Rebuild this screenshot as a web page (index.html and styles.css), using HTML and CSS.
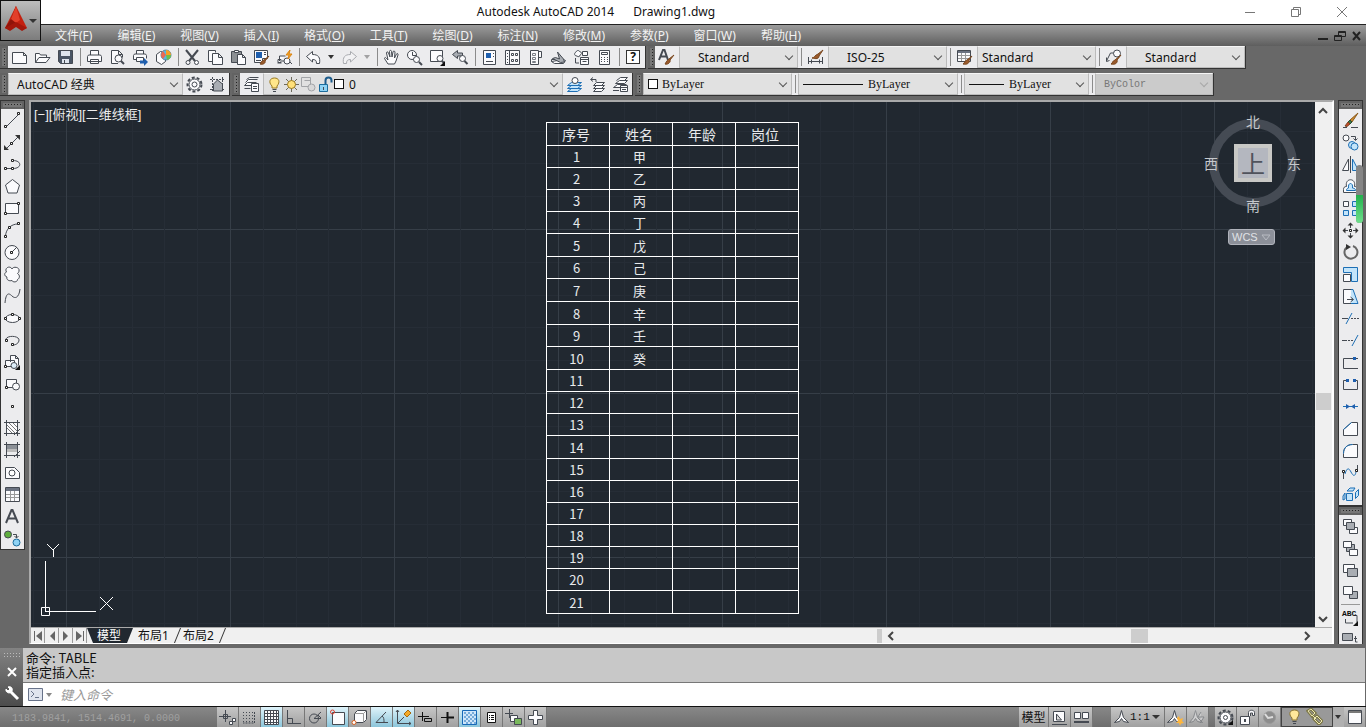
FILE: index.html
```html
<!DOCTYPE html>
<html lang="zh-CN">
<head>
<meta charset="UTF-8">
<meta name="viewport" content="width=device-width, initial-scale=1.0">
<title>Autodesk AutoCAD 2014 Drawing1.dwg</title>
<link rel="stylesheet" href="styles.css">
</head>
<body>
  <header class="top">
    <button class="app-button" aria-label="应用程序菜单">
      <svg width="38" height="38"><path d="M15 4L4 26l5 2 6-4 6 4 5-2z" fill="#c3200f"/><path d="M15 4L10 17l-6 9 5 2 6-8z" fill="#8f1409"/><path d="M15 4l4 14-4 3-5-4z" fill="#e2402a"/><path d="M4 26l11-6 11 6-5 3-6-4-6 4z" fill="#a3170b"/><path d="M28 17h8l-4 4z" fill="#333"/></svg>
    </button>
    <div class="titlebar">
      <h1>Autodesk AutoCAD 2014 <span>Drawing1.dwg</span></h1>
      <div class="window-buttons">
        <button aria-label="最小化"><svg width="12" height="12"><path d="M1 6.500h10"/></svg></button>
        <button aria-label="还原"><svg width="12" height="12"><path d="M1.500 3.500h7v7h-7zM3.500 3.500v-2h7v7h-2"/></svg></button>
        <button aria-label="关闭"><svg width="12" height="12"><path d="M1 1l10 10M11 1L1 11"/></svg></button>
      </div>
    </div>
    <nav class="menubar">
      <a href="#">文件(<u>F</u>)</a>
      <a href="#">编辑(<u>E</u>)</a>
      <a href="#">视图(<u>V</u>)</a>
      <a href="#">插入(<u>I</u>)</a>
      <a href="#">格式(<u>O</u>)</a>
      <a href="#">工具(<u>T</u>)</a>
      <a href="#">绘图(<u>D</u>)</a>
      <a href="#">标注(<u>N</u>)</a>
      <a href="#">修改(<u>M</u>)</a>
      <a href="#">参数(<u>P</u>)</a>
      <a href="#">窗口(<u>W</u>)</a>
      <a href="#">帮助(<u>H</u>)</a>
      <div class="doc-buttons">
        <button aria-label="最小化图形"><svg width="12" height="12"><path d="M1 9h10" stroke-width="2"/></svg></button>
        <button aria-label="还原图形"><svg width="12" height="12"><path d="M.500 5.500h7v5h-7zM4.500 5v-3.500h7v5h-4M.500 6.500h7M4.500 2.500h7"/></svg></button>
        <button aria-label="关闭图形"><svg width="12" height="12"><path d="M2 2l7 8M9 2l-7 8" stroke-width="2"/></svg></button>
      </div>
    </nav>
  </header>

  <!-- 标准 / 样式 -->
  <div class="toolrow">
    <div class="toolbar">
      <span class="grip"></span>
      <button class="tb" aria-label="新建"><svg><path class="p" d="M1.500 3.500h11l3 3v8h-14zM12.500 3.500v3h3"/></svg></button>
      <button class="tb" aria-label="打开"><svg><path class="p" d="M1.500 13.500v-9h4l1 1.500h6v3M1.500 13.500l3.500-5h11l-4 5z"/></svg></button>
      <button class="tb" aria-label="保存"><svg><path d="M1.500 1.500h14v13h-12l-2-2z" fill="#4a5565"/><path d="M4 2h9v5H4zM5 10h7v4H5z" fill="#dfe5ee" stroke="none"/><path d="M7.500 11v3"/></svg></button>
      <span class="sep"></span>
      <button class="tb" aria-label="打印"><svg><path class="p" d="M4.500 6V1.500h8V6M1.500 12.500v-5l1-1.500h12l1 1.500v5zM4.500 10.500h8v4h-8z"/></svg></button>
      <button class="tb" aria-label="打印预览"><svg><path class="p" d="M9 14.500H2.500v-13h7l4 4v3M9.500 1.500v4h4"/><circle class="p" cx="9.500" cy="9.500" r="3.500"/><path d="M12 12l3 3" stroke-width="2"/></svg></button>
      <button class="tb" aria-label="发布"><svg><path class="p" d="M4.500 5V1.500h7V5M1.500 10.500v-4l1-1.500h11l1 1.500v3M4 10.500h-2.500M4.500 8.500h7v4h-7z"/><path class="blue" d="M8 11.500h4V9l4 4-4 4v-2.500H8z"/></svg></button>
      <button class="tb" aria-label="三维打印"><svg><path class="p" d="M1.500 5.500l4-3 5 1v9l-4 3-5-3z"/><circle cx="11" cy="6" r="5" fill="#53b8e4" stroke="#5b87a0"/><path d="M11 1a5 5 0 015 5h-5z" fill="#f3a128" stroke="none"/><path d="M8 2l3 4-3 4a5 5 0 010-8z" fill="#e86a54" stroke="none"/><path d="M11 6h5a5 5 0 01-4 5z" fill="#6cc04a" stroke="none"/></svg></button>
      <span class="sep"></span>
      <button class="tb" aria-label="剪切"><svg><path d="M2 1l9 11M14 1L5 12" stroke-width="2"/><circle class="p" cx="4" cy="13.500" r="2"/><circle class="p" cx="12.500" cy="13.500" r="2"/></svg></button>
      <button class="tb" aria-label="复制"><svg><path class="p" d="M5 12.500H1.500v-11h7v2M5.500 4.500h6l4 4v7h-10zM11.500 4.500v4h4"/></svg></button>
      <button class="tb" aria-label="粘贴"><svg><path d="M1.500 2.500h10v11h-10z" fill="#8b8f93"/><path class="p" d="M4.500 1.500h4v2h-4zM7.500 5.500h5l3 3v7h-8zM12.500 5.500v3h3"/></svg></button>
      <button class="tb" aria-label="特性匹配"><svg><path class="p" d="M1.500 1.500h13v8h-5v4h-8z"/><path class="blue" d="M3 3h6v6H3z"/><path d="M11 3.500h2M11 5.500h2M3 11.500h5"/><path class="brush" d="M16 7l-4 5c1 2-2 4-5 3 1-1 1-3 4-4z"/></svg></button>
      <button class="tb" aria-label="块编辑器"><svg><path class="p" d="M1.500 14h4M3.500 12v-5h6M2 10.500h3v3H2z"/><circle class="p" cx="11" cy="12" r="3"/><path d="M6 12h2M14 13l2 2"/><path d="M14 1l-4 5h3l-1 4 4-5h-3z" fill="#f7a928" stroke="#d98212"/></svg></button>
      <span class="sep"></span>
      <button class="tb" aria-label="放弃"><svg><path class="p" d="M1.500 7.500l6-5v3c6 0 8 3 7 9h-3c0-3-1-4-4-4v2.500z"/></svg></button>
      <button class="tb-arrow" aria-label="放弃列表"><i></i></button>
      <button class="tb dim" aria-label="重做"><svg><path class="p" d="M15.500 7.500l-6-5v3c-6 0-8 3-7 9h3c0-3 1-4 4-4v2.500z"/></svg></button>
      <button class="tb-arrow dim" aria-label="重做列表"><i></i></button>
      <span class="sep"></span>
      <button class="tb" aria-label="平移"><svg><path class="p" d="M5 15L1.500 9.500c0-1 1-1.500 2 0L5 11 3.500 4c0-1.500 1.500-1.500 2 0L7 8 6.500 2.500c0-1.500 2-1.500 2 0L9 8l1-5c0-1.500 2-1 2 0l-.500 6 2-4c.500-1 2-.500 1.500 1L13 12l-1.500 3z"/></svg></button>
      <button class="tb" aria-label="实时缩放"><svg><circle class="p" cx="6" cy="6" r="4.500"/><path d="M6.500 3v3.500H10"/><circle class="p" cx="10.500" cy="10.500" r="3"/><path d="M13 13l3 3" stroke-width="2"/></svg></button>
      <button class="tb" aria-label="窗口缩放"><svg><path class="p" d="M1.500 1.500h12v11h-12z"/><circle class="p" cx="11" cy="9.500" r="3"/><path d="M13 12l2 2" stroke-width="2"/><path d="M16 12v5h-5z" fill="#111" stroke="none"/></svg></button>
      <button class="tb" aria-label="缩放上一个"><svg><path class="g" d="M.500 5.500l5-4v2.500h5v3h-5v2.500z"/><circle class="p" cx="10.500" cy="9.500" r="3"/><path d="M12.500 12l3 3" stroke-width="2"/></svg></button>
      <span class="sep"></span>
      <button class="tb" aria-label="特性"><svg><path class="p" d="M2.500 1.500h12v14h-12z"/><path class="blue" d="M5 4h5v5H5z"/><path d="M12.500 4v1M12.500 7v1M5 12.500h7"/></svg></button>
      <button class="tb" aria-label="设计中心"><svg><path class="p" d="M1.500 1.500h14v14h-14zM5.500 1.500v14M7.500 4.500h2v2h-2zM11.500 4.500h2v2h-2zM7.500 10.500h2v2h-2zM11.500 10.500h2v2h-2z"/><path d="M3 4.500h1M3 7.500h1M3 10.500h1M3 13.500h1"/></svg></button>
      <button class="tb" aria-label="工具选项板"><svg><path class="p" d="M3.500 1.500h8v14h-8zM11.500 2.500h3v6h-3"/><path d="M5.500 4.500h3v2h-3zM5.500 8.500h3v2h-3zM5.500 12.500h3v1h-3z" stroke="#7a7f86"/></svg></button>
      <button class="tb" aria-label="图纸集管理器"><svg><path class="p" d="M1.500 12.500l3 2h9l2-3-2-1zM1.500 12.500v-2h7"/><path class="g" d="M2.500 9.500l3-1 4 1.500-2-7 6 7 1 3-4 .500z"/></svg></button>
      <button class="tb" aria-label="标记集管理器"><svg><path class="p" d="M3 3c1-2 3-2 4 0 2 0 2 2 0 3 0 2-2 2-3 1-3 0-3-3-1-4zM9.500 2.500h5v4h-5zM7.500 8.500h8v7h-8zM7.500 10.500h8M9.500 12.500h4"/><path d="M2.500 9v5H6"/></svg></button>
      <button class="tb" aria-label="快速计算器"><svg><path class="p" d="M3.500 1.500h10v14h-10zM5.500 3.500h6v2h-6z"/><path d="M5 8.500h7M5 10.500h7M5 12.500h7" stroke-dasharray="1 2"/></svg></button>
      <span class="sep"></span>
      <button class="tb help" aria-label="帮助"><span>?</span></button>
    </div>
    <div class="toolbar styles">
      <span class="grip"></span>
      <button class="tb" aria-label="文字样式管理"><svg><path d="M1 11L5 1h1.500l3.500 10M3 7.500h5" stroke-width="2"/><path class="brush" d="M16 6l-4 5c1 2-2 5-5 4 1-1 1-3 4-5z"/></svg></button>
      <label class="combo inset"><select aria-label="文字样式"><option>Standard</option></select></label>
      <span class="sep"></span>
      <button class="tb" aria-label="标注样式管理"><svg><path d="M1.500 8v7M15.500 8v7M2 12.500h13M4.500 10.500v4M12.500 10.500v4"/><path class="brush" d="M16 1l-4 6c0 3-3 3-7 2 2 0 3-3 6-4z"/></svg></button>
      <label class="combo inset"><select aria-label="标注样式"><option>ISO-25</option></select></label>
      <span class="sep"></span>
      <button class="tb" aria-label="表格样式管理"><svg><path class="p" d="M1.500 1.500h13v11h-13z"/><path d="M2 6.500h12M2 9.500h12M5.500 4v8M9.500 4v8" stroke="#999"/><path d="M2 3h12" stroke-width="2" stroke="#6b7280"/><path class="brush" d="M16 7l-3 4c1 3-2 5-6 4 2-1 1-3 4-4z"/></svg></button>
      <label class="combo"><select aria-label="表格样式"><option>Standard</option></select></label>
      <span class="sep"></span>
      <button class="tb" aria-label="多重引线样式管理"><svg><path d="M1.500 12l4-8h4M1.500 8.500v4l3-1"/><circle class="p" cx="12" cy="4.500" r="3.500"/><path class="brush" d="M16 6l-4 5c1 3-2 5-6 4 2-1 1-3 4-4z"/></svg></button>
      <label class="combo inset"><select aria-label="多重引线样式"><option>Standard</option></select></label>
    </div>
  </div>

  <!-- 工作空间 / 图层 / 特性 -->
  <div class="toolrow">
    <div class="toolbar">
      <span class="grip"></span>
      <label class="combo workspace"><select aria-label="工作空间"><option>AutoCAD 经典</option></select></label>
      <button class="tb" aria-label="工作空间设置"><svg><circle cx="8.500" cy="8.500" r="7" stroke-width="2" stroke-dasharray="3 2"/><circle class="p" cx="8.500" cy="8.500" r="5.500"/><circle cx="8.500" cy="8.500" r="2.500"/></svg></button>
      <button class="tb" aria-label="我的工作空间"><svg><path d="M1 3.500h15M1 13.500h15M3.500 1v15M13.500 1v15" stroke-dasharray="2 1"/><path class="g" d="M4.500 15V8l4-4 5 4v7z"/></svg></button>
    </div>
    <div class="toolbar">
      <span class="grip"></span>
      <button class="tb" aria-label="图层特性管理器"><svg><path class="p" d="M8 9.500H1.500l3-3h9M2.500 6.500l3-3h9M3.500 3.500l3-2h9M1.500 12.500h6M8.500 7.500h7v8h-7z"/><path d="M10 10.500h4M10 12.500h4"/></svg></button>
      <label class="combo layer">
        <svg><path d="M6 10c-4-4-2-8 2.500-8s6 4 2.500 8v2H6z" fill="#ffe68a" stroke="#9a7a20"/><path d="M6.500 13.500h4M7 15.500h3"/></svg>
        <svg><path d="M8.500 1v15M1 8.500h15M3 3l11 11M14 3L3 14" stroke="#6c6a5c"/><circle cx="8.500" cy="8.500" r="4" fill="#ffe07a" stroke="#9a7a20"/></svg>
        <svg class="dim"><path d="M1.500 1.500h9v9h-9zM4.500 4.500h6"/><circle cx="11.500" cy="11.500" r="3.500" fill="#ccc"/></svg>
        <svg><path d="M2.500 8.500h8v7h-8z" fill="#8fd3f5" stroke="#1c6c9c"/><path d="M8.500 8V4.500c0-4 6-4 6 0v2" stroke="#1c5c8c" stroke-width="2"/><path d="M6.500 11v3"/></svg>
        <i class="swatch"></i>
        <select aria-label="图层"><option>0</option></select>
      </label>
      <button class="tb" aria-label="将对象的图层置为当前"><svg><path class="b" d="M1.500 9.500l4-3h10l-4 3zM1.500 12.500l4-3h10l-4 3zM1.500 15.500l4-3h10l-4 3z"/><circle cx="9" cy="4.500" r="3" fill="#fff"/></svg></button>
      <button class="tb" aria-label="上一个图层"><svg><path class="p" d="M4.500 9.500l3-3h8l-3 3zM4.500 12.500l3-3h8l-3 3zM4.500 15.500l3-3h8l-3 3z"/><path d="M7 6V3.500H2M4 1.500l-2.500 2 2.500 2"/></svg></button>
      <button class="tb" aria-label="图层状态管理器"><svg><path class="p" d="M8 11.500H1.500l4-3h9M3.500 7.500l4-3h8l-3 3zM4.500 4.500l4-3h7l-3 3M8.500 9.500h7v6h-7zM8.500 11.500h7"/><path d="M1 14.500h6M10 13.500h4"/></svg></button>
    </div>
    <div class="toolbar props">
      <span class="grip"></span>
      <label class="combo color"><i class="swatch"></i><select aria-label="颜色"><option>ByLayer</option></select></label>
      <span class="sep"></span>
      <label class="combo ltype"><i class="line"></i><select aria-label="线型"><option>ByLayer</option></select></label>
      <span class="sep"></span>
      <label class="combo lweight"><i class="line"></i><select aria-label="线宽"><option>ByLayer</option></select></label>
      <span class="sep"></span>
      <label class="combo pstyle"><select aria-label="打印样式" disabled><option>ByColor</option></select></label>
    </div>
  </div>

  <main class="work">
    <div class="side">
      <div class="toolbar vertical">
        <span class="grip"></span>
        <button class="tb" aria-label="直线"><svg><path d="M3 14L14 3"/><path class="n" d="M.500 13.500h2v2h-2zM13.500.500h2v2h-2z"/></svg></button>
        <button class="tb" aria-label="构造线"><svg><path d="M2 15L15 2"/><path class="n" d="M6.500 8.500h2v2h-2z"/><path d="M11 1h5v5zM0 11v5h5z" fill="#333" stroke="none"/></svg></button>
        <button class="tb" aria-label="多段线"><svg><path d="M2 12.500h6M9 4.500c9 0 9 8 0 8"/><path class="n" d="M.500 11.500h2v2h-2zM7.500 11.500h2v2h-2zM7.500 3.500h2v2h-2z"/></svg></button>
        <button class="tb" aria-label="多边形"><svg><path class="p" d="M8.500 1.500l7 5.500-2.500 8H4L1.500 7z"/></svg></button>
        <button class="tb" aria-label="矩形"><svg><path class="p" d="M1.500 3.500h13v10h-13z"/><path class="n" d="M.500 12.500h2v2h-2zM13.500 2.500h2v2h-2z"/></svg></button>
        <button class="tb" aria-label="圆弧"><svg><path d="M1.500 14C2 7 7 2 14 2"/><path class="n" d="M.500 13.500h2v2h-2zM4.500 4.500h2v2h-2zM13.500.500h2v2h-2z"/></svg></button>
        <button class="tb" aria-label="圆"><svg><circle class="p" cx="8" cy="8.500" r="7"/><path d="M8 8l5-5"/><path class="n" d="M6.500 7.500h2v2h-2z"/></svg></button>
        <button class="tb" aria-label="修订云线"><svg><path class="p" d="M8 3c1-3 8-2 7 2 0 1-1 2-1.500 2.500 3 2 2 5 0 6 0 3-5 3-5.500 1-3 1-6-1-5-3.500-3-1-3-4-.500-5C0 2 6-1 8 3z"/></svg></button>
        <button class="tb" aria-label="样条曲线"><svg><path d="M1 15C2 4 5 5 8 8s7 2 8-7"/></svg></button>
        <button class="tb" aria-label="椭圆"><svg><ellipse class="p" cx="8.500" cy="8.500" rx="7" ry="4"/><path class="n" d="M.500 7.500h2v2h-2zM14.500 7.500h2v2h-2zM7.500 3.500h2v2h-2z"/></svg></button>
        <button class="tb" aria-label="椭圆弧"><svg><path d="M2 9C0 3 15 3 15 8c0 3-3 5-6 5"/><path class="n" d="M1.500 7.500h2v2h-2zM7.500 11.500h2v2h-2z"/></svg></button>
        <button class="tb" aria-label="插入块"><svg><path class="p" d="M6.500 8V1.500h5l3 3v7M11.500 1.500v3h3M1.500 6.500h9v6h-9z"/><circle cx="10" cy="11.500" r="3" fill="#dcecf7"/><path class="n" d="M.500 11.500h2v2h-2z"/><path d="M16 11v5h-5z" fill="#111" stroke="none"/></svg></button>
        <button class="tb" aria-label="创建块"><svg><path class="p" d="M2.500 3.500h10v8h-10z"/><circle class="p" cx="12" cy="10.500" r="3.500"/><path class="n" d="M1.500 10.500h2v2h-2z"/></svg></button>
        <button class="tb" aria-label="点"><svg><path class="n" d="M7.500 7.500h2v2h-2z"/></svg></button>
        <button class="tb" aria-label="图案填充"><svg><path class="p" d="M2.500 2.500h11v11h-11z"/><path d="M3 8l5 5M3 5l8 8M5 3l8 8M9 3l4 4" stroke="#777"/><path d="M0 2.500h16M0 13.500h16M2.500 0v16M13.500 0v16M10 15l6-6"/></svg></button>
        <button class="tb" aria-label="渐变色"><svg><path d="M3 3h10v4H3z" fill="#8a8f96" stroke="none"/><path d="M3 7h10v3H3z" fill="#bbb" stroke="none"/><path d="M0 2.500h16M0 13.500h16M2.500 0v16M13.500 0v16M10 15l6-6"/></svg></button>
        <button class="tb" aria-label="面域"><svg><path class="p" d="M1.500 3.500h9l5 5v6h-14z"/><circle cx="8" cy="9" r="3" fill="#fff"/></svg></button>
        <button class="tb" aria-label="表格"><svg><path class="p" d="M1.500 1.500h14v14h-14z"/><path d="M2 3.500h13" stroke-width="3" stroke="#6b7280"/><path d="M2 8.500h13M2 11.500h13M6.500 5v10M10.500 5v10" stroke="#999"/></svg></button>
        <button class="tb" aria-label="多行文字"><svg><path d="M2 15L7.500 2h1L14 15M4 10.500h8" stroke-width="2"/></svg></button>
        <button class="tb" aria-label="添加选定对象"><svg><circle cx="4" cy="4.500" r="3.500" fill="#5fae3f"/><path d="M9 4.500h3.500V8M10.500 6l2 2 2-2"/><circle cx="12.500" cy="12.500" r="3.500" fill="#8fd3f5" stroke="#1c6c9c"/></svg></button>
      </div>
    </div>

    <section class="viewport">
      <div class="view-row">
        <div class="canvas">
          <p class="view-label">[−][俯视][二维线框]</p>
          <table class="roster">
            <tr class="tall"><th>序号</th><th>姓名</th><th>年龄</th><th>岗位</th></tr>
            <tr><td>1</td><td>甲</td><td></td><td></td></tr>
            <tr><td>2</td><td>乙</td><td></td><td></td></tr>
            <tr><td>3</td><td>丙</td><td></td><td></td></tr>
            <tr><td>4</td><td>丁</td><td></td><td></td></tr>
            <tr class="tall"><td>5</td><td>戊</td><td></td><td></td></tr>
            <tr><td>6</td><td>己</td><td></td><td></td></tr>
            <tr class="tall"><td>7</td><td>庚</td><td></td><td></td></tr>
            <tr class="tall"><td>8</td><td>辛</td><td></td><td></td></tr>
            <tr><td>9</td><td>壬</td><td></td><td></td></tr>
            <tr class="tall"><td>10</td><td>癸</td><td></td><td></td></tr>
            <tr><td>11</td><td></td><td></td><td></td></tr>
            <tr><td>12</td><td></td><td></td><td></td></tr>
            <tr><td>13</td><td></td><td></td><td></td></tr>
            <tr class="tall"><td>14</td><td></td><td></td><td></td></tr>
            <tr><td>15</td><td></td><td></td><td></td></tr>
            <tr><td>16</td><td></td><td></td><td></td></tr>
            <tr><td>17</td><td></td><td></td><td></td></tr>
            <tr><td>18</td><td></td><td></td><td></td></tr>
            <tr><td>19</td><td></td><td></td><td></td></tr>
            <tr><td>20</td><td></td><td></td><td></td></tr>
            <tr class="tall"><td>21</td><td></td><td></td><td></td></tr>
          </table>
          <svg class="ucs" width="76" height="76"><path d="M5.500 19v51M5 69.500h51M1.500 65.500h8v8h-8zM7 2l6 6 6-6M13.500 8v7M60 55l13 13M73 55L60 68"/></svg>
          <div class="viewcube">
            <span class="north">北</span>
            <span class="west">西</span>
            <button class="face">上</button>
            <span class="east">东</span>
            <span class="south">南</span>
          </div>
          <button class="wcs">WCS <svg width="10" height="7"><path d="M1 1h8L5 6z"/></svg></button>
        </div>
        <div class="vscroll">
          <button aria-label="向上滚动"><svg width="10" height="8"><path d="M1 6l4-4 4 4"/></svg></button>
          <span class="track-a"></span><span class="thumb"></span><span class="track-b"></span>
          <button aria-label="向下滚动"><svg width="10" height="8"><path d="M1 2l4 4 4-4"/></svg></button>
        </div>
      </div>
      <div class="tab-row">
        <button class="nav" aria-label="第一个"><svg width="10" height="10"><path d="M1.500 0v10"/><path class="f" d="M9 0v10L3 5z"/></svg></button>
        <button class="nav" aria-label="上一个"><svg width="10" height="10"><path class="f" d="M8 0v10L3 5z"/></svg></button>
        <button class="nav" aria-label="下一个"><svg width="10" height="10"><path class="f" d="M2 0v10l5-5z"/></svg></button>
        <button class="nav" aria-label="最后一个"><svg width="10" height="10"><path class="f" d="M1 0v10l6-5z"/><path d="M8.500 0v10"/></svg></button>
        <a href="#" class="tab active">模型</a>
        <a href="#" class="tab">布局1</a>
        <a href="#" class="tab">布局2</a>
        <div class="hscroll">
          <span class="splitter"></span>
          <button aria-label="向左滚动"><svg width="8" height="10"><path d="M6 1L2 5l4 4"/></svg></button>
          <span class="track-a"></span><span class="thumb"></span><span class="track-b"></span>
          <button aria-label="向右滚动"><svg width="8" height="10"><path d="M2 1l4 4-4 4"/></svg></button>
        </div>
      </div>
    </section>

    <div class="side right">
      <div class="toolbar vertical">
        <span class="grip"></span>
        <button class="tb" aria-label="删除"><svg><path d="M1 15.500h4M9 15.500h7"/><path d="M16 1l-8 7 2 2z" fill="#d08b2c" stroke="#8a5a1c"/><path d="M8 8l2 2-2 2-2-2z" fill="#3d7b45" stroke="#2d4a33"/><path d="M6 10l2 2-3 2.500-2-.500z" fill="#c64a28" stroke="#742"/></svg></button>
        <button class="tb" aria-label="复制对象"><svg><circle class="p" cx="4" cy="4" r="3"/><path d="M9 2.500h4.500V6M11.500 4.500l2 2 2-2"/><circle class="b" cx="10" cy="11" r="3.500"/><circle class="b" cx="12.500" cy="12.500" r="3.500"/></svg></button>
        <button class="tb" aria-label="镜像"><svg><path class="p" d="M6.500 3v11.500h-6z"/><path class="b" d="M10.500 3v11.500h6z"/><path d="M8.500 0v17"/></svg></button>
        <button class="tb" aria-label="偏移"><svg><path class="p" d="M1.500 14.500h14v-3c0-2-1-3-3-3 2-9-10-9-8 0-2 0-3 1-3 3z"/><path class="b" d="M4.500 12.500h9c0-2-1-2-3-2.500 1-6-5-6-4 0-1 .500-2 .500-2 2.500z"/></svg></button>
        <button class="tb" aria-label="阵列"><svg><path class="p" d="M1.500 1.500h5v5h-5z"/><path class="b" d="M10.500 1.500h5v5h-5zM1.500 10.500h5v5h-5zM10.500 10.500h5v5h-5z"/></svg></button>
        <button class="tb" aria-label="移动"><svg><path d="M8.500 1v5M8.500 11v5M1 8.500h5M11 8.500h5"/><path class="n" d="M7.500 7.500h2v2h-2z"/><path d="M5.500 3.500l3-3 3 3zM5.500 13.500l3 3 3-3zM3.500 5.500l-3 3 3 3zM13.500 5.500l3 3-3 3z" fill="#333" stroke="none"/></svg></button>
        <button class="tb" aria-label="旋转"><svg><path d="M5 3a6.500 6.500 0 106-1" stroke-width="2" stroke="#666"/><path d="M4 0l5 3-5 3z" fill="#333" stroke="none"/></svg></button>
        <button class="tb" aria-label="缩放"><svg><path class="b" d="M1.500 1.500h14v14h-6v-9h-8z"/><path class="p" d="M1.500 8.500h7v7h-7z"/></svg></button>
        <button class="tb" aria-label="拉伸"><svg><path class="b" d="M8 1.500h3l5 14H8z"/><path class="p" d="M9 1.500H1.500v14H9"/><path d="M5 11.500h6M8.500 9l3 2.500-3 2.500"/></svg></button>
        <button class="tb" aria-label="修剪"><svg><path d="M0 8.500h6"/><path class="b" d="M4 14l6-11"/><path d="M9 8.500h8" stroke-dasharray="2 1"/></svg></button>
        <button class="tb" aria-label="延伸"><svg><path d="M0 8.500h5"/><path d="M6 8.500h6" stroke-dasharray="2 1"/><path class="b" d="M10 14l6-11"/></svg></button>
        <button class="tb" aria-label="打断于点"><svg><path d="M16 4.500H1.500v10H16"/><path class="blue" d="M11 3h3v3h-3z"/></svg></button>
        <button class="tb" aria-label="打断"><svg><path d="M4 4.500H1.500v9h14v-9H13"/><path class="blue" d="M4 3h3v3H4zM11 3h3v3h-3z"/></svg></button>
        <button class="tb" aria-label="合并"><svg><path class="bl" d="M1 8.500h15"/><path class="blue" d="M4 6l4 2.500L4 11zM13 6L9 8.500l4 2.500z"/></svg></button>
        <button class="tb" aria-label="倒角"><svg><path class="p" d="M1.500 15.500v-6l8-7h6v13z"/><path class="b" d="M1.500 9.500l8-7"/></svg></button>
        <button class="tb" aria-label="圆角"><svg><path class="p" d="M1.500 15.500v-4c0-6 4-9 9-9h5v13z"/><path class="bl" d="M1.500 11.500c0-6 4-9 9-9"/></svg></button>
        <button class="tb" aria-label="光顺曲线"><svg><path d="M1.500 15V7M15.500 8V1"/><path class="n" d="M.500 6.500h2v2h-2zM13.500 5.500h2v2h-2z"/><path class="bl" d="M3 10c2-7 4-6 6-2s4 5 5 0"/></svg></button>
        <button class="tb" aria-label="分解"><svg><path class="b" d="M4.500 7.500h6v7h-6zM5 5l3-3h5l-2 3zM13.500 6.500l3-3v6l-3 3zM3 7l-2 3v4l2-1z"/></svg></button>
      </div>
      <div class="toolbar vertical">
        <span class="grip"></span>
        <button class="tb" aria-label="前置"><svg><path class="p" d="M1.500 1.500h8v6h-8zM7.500 9.500h8v6h-8z"/><path class="g" d="M4.500 4.500h8v7h-8z"/></svg></button>
        <button class="tb" aria-label="后置"><svg><path class="g" d="M4.500 4.500h8v7h-8z"/><path class="p" d="M1.500 1.500h8v6h-8zM7.500 9.500h8v6h-8z"/></svg></button>
        <button class="tb" aria-label="置于对象之上"><svg><path class="p" d="M1.500 2.500h11v8h-11z"/><path class="g" d="M5.500 6.500h10v8h-10z"/></svg></button>
        <button class="tb" aria-label="置于对象之下"><svg><path class="g" d="M7.500 7.500h8v7h-8z"/><path class="p" d="M1.500 2.500h9v8h-9z"/></svg></button>
        <span class="hsep"></span>
        <button class="tb abc" aria-label="文字对象前置"><span>ABC</span><svg><path d="M3.500 10v4H11M13 6.500h2v7"/><path d="M16 12v5h-5z" fill="#111" stroke="none"/></svg></button>
        <button class="tb" aria-label="将图案填充项后置"><svg><path class="g" d="M.500 2.500h10v7h-10z"/><path d="M13.500 5v6h2M12 7.500h3"/></svg></button>
      </div>
      <span class="meter"><i></i></span>
    </div>
  </main>

  <section class="command">
    <div class="command-grip">
      <span class="dots"></span>
      <button aria-label="关闭命令行"><svg width="12" height="12"><path d="M2 2l8 8M10 2l-8 8" stroke-width="2"/></svg></button>
      <button aria-label="自定义"><svg width="16" height="16"><path d="M6 6l8 8" stroke-width="3"/><path d="M2 4l2 2 2-2-2-2c3-1 5 1 4 4-1 2-4 3-6 0z" fill="#fff"/></svg></button>
    </div>
    <div class="command-body">
      <pre class="history">命令: TABLE
指定插入点:</pre>
      <div class="prompt">
        <button class="prompt-icon" aria-label="最近使用的命令"><svg width="15" height="13"><path d="M.500.500h14v12H.500z" fill="#dfe4ee"/><path d="M3 3l3 3-3 3M7 9.500h4"/></svg></button>
        <i class="down"></i>
        <input type="text" placeholder="键入命令" aria-label="命令">
      </div>
    </div>
  </section>

  <footer class="status">
    <output class="coords">1183.9841, 1514.4691, 0.0000</output>
    <button class="sb" aria-label="推断约束"><svg><path d="M0 7.500h12M6.500 1v12M4.500 5.500h4v4h-4z"/><path class="p" d="M10.500 12.500h3v3h-3zM13.500 9.500h3v3h-3z"/></svg></button>
    <button class="sb" aria-label="捕捉模式"><svg><path d="M2 3.500h11M2 6.500h11M2 9.500h11M2 12.500h11" stroke-dasharray="1 2"/><path d="M13.500 3v11H2" stroke-dasharray="2 1"/></svg></button>
    <button class="sb on" aria-label="栅格显示"><svg><path class="p" d="M1.500 1.500h14v14h-14zM4.500 1v15M7.500 1v15M10.500 1v15M13.500 1v15M1 4.500h15M1 7.500h15M1 10.500h15M1 13.500h15"/></svg></button>
    <button class="sb" aria-label="正交模式"><svg><path d="M2.500 1v13.500H16M2.500 9.500h5v5"/></svg></button>
    <button class="sb" aria-label="极轴追踪"><svg><circle cx="7" cy="9.500" r="4.500"/><path d="M14 3L7 9.500h7M11 6l3 3"/></svg></button>
    <button class="sb on" aria-label="对象捕捉"><svg><path class="p" d="M3.500 3.500h12v12h-12z"/><circle cx="3.500" cy="3" r="2" stroke="#e04030"/></svg></button>
    <button class="sb" aria-label="三维对象捕捉"><svg><path class="p" d="M3.500 4.500l3-3h9v9l-3 3h-9z"/><path d="M3.500 4.500h9v9M12.500 4.500l3-3" stroke="#999"/><circle cx="3" cy="13.500" r="2" fill="#fff" stroke="#d86020"/></svg></button>
    <button class="sb on" aria-label="对象捕捉追踪"><svg><path d="M13 3L3 13.500h12M9 7c2 1 2 4 2 6"/></svg></button>
    <button class="sb on" aria-label="动态UCS"><svg><path d="M2.500 1v13.500H16M1 3l1.500-2L4 3M14 13l2 1.500-2 1.500M3 14L9 8"/><path d="M9 5l4-4 3 3-4 4z" fill="#f3a928" stroke="#a8690c"/></svg></button>
    <button class="sb" aria-label="动态输入"><svg><path d="M1 7.500h11M5.500 3v9M7.500 9.500h7v3h-7z" stroke="#111"/></svg></button>
    <button class="sb" aria-label="线宽"><svg><path d="M2 8.500h7" stroke="#111"/><path d="M9 8.500h6M8.500 3v11" stroke-width="2" stroke="#111"/></svg></button>
    <button class="sb on" aria-label="透明度"><svg><path d="M1.500 1.500h14v14h-14z" fill="#cfe6fa" stroke="#1769b8"/><path d="M3 4h12M3 8h12M3 12h12" stroke="#75abd9" stroke-width="2" stroke-dasharray="2 2"/><path d="M5 6h10M5 10h10M5 14h10" stroke="#75abd9" stroke-width="2" stroke-dasharray="2 2"/></svg></button>
    <button class="sb" aria-label="快捷特性"><svg><path d="M4.500 3.500h8v10h-8z" fill="#fff" stroke="#111"/><path d="M6 6.500h1M8 6.500h3M6 8.500h1M8 8.500h3M6 10.500h1M8 10.500h3" stroke="#111"/></svg></button>
    <button class="sb" aria-label="选择循环"><svg><path d="M0 4.500h8M4.500 0v9"/><path class="p" d="M5.500 6.500h7v6h-7z"/><path d="M9.500 9.500h7v6h-7z" fill="#79b95c"/></svg></button>
    <button class="sb" aria-label="注释监视器"><svg><path class="p" d="M6.500 1.500h4v5h5v4h-5v5h-4v-5h-5v-4h5z"/></svg></button>
    <span class="fill"></span>
    <button class="sb model">模型</button>
    <button class="sb" aria-label="快速查看布局"><svg><path class="p" d="M2.500 2.500h11v10h-11z"/><path d="M5.500 5v6h5z" fill="#ddd"/><path d="M1 15.500h15"/></svg></button>
    <button class="sb" aria-label="快速查看图形"><svg><path class="p" d="M1.500 3.500h6v6h-6zM9.500 3.500h6v6h-6z"/><path d="M1 13h15" stroke-width="2"/></svg></button>
    <span class="gap"></span>
    <button class="sb scale"><svg><path class="p" d="M8.500 1.500l2 7 5 5-5-1-2-3-2 3-5 1 5-5z"/></svg>1:1<i class="down"></i></button>
    <button class="sb" aria-label="注释可见性"><svg><path class="p" d="M7.500 1.500l2 7 5 5-5-1-2-3-2 3-5 1 5-5z"/><path d="M12 7l1 3 3-1-1 3 2 2-3 .500-1 2.500-1-3-3 0 2-2-1-3z" fill="#ffb63c" stroke="none"/></svg></button>
    <button class="sb dim" aria-label="自动添加比例"><svg><path class="p" d="M6.500 1.500l2 7 5 5-5-1-2-3-2 3-4 1 4-5zM12 3l-3 5 6 0-4 6"/></svg></button>
    <span class="gap small"></span>
    <button class="sb" aria-label="切换工作空间"><svg><circle cx="8.500" cy="8.500" r="7" stroke-width="2" stroke-dasharray="3 2"/><circle class="p" cx="8.500" cy="8.500" r="5.500"/><circle cx="8.500" cy="8.500" r="2"/><path d="M16 11v5h-5z" fill="#111" stroke="none"/></svg></button>
    <button class="sb" aria-label="锁定"><svg><path class="p" d="M1.500 7.500h9v8h-9zM9.500 7V3.500c0-3 6-3 6 0v3h-2V4h-2v3"/><path d="M6 10v3" stroke-width="2"/></svg></button>
    <button class="sb" aria-label="硬件加速"><svg><circle cx="8.500" cy="8.500" r="6" fill="#8d8d8d" stroke="#999"/><path d="M4 5l3 4 5-1" stroke="#ddd" stroke-width="2"/></svg></button>
    <span class="tray">
      <svg><path d="M6 10c-4-4-2-8 2.500-8s6 4 2.500 8v2H6z" fill="#ffe89a" stroke="#8a7430"/><path d="M6.500 13.500h4M7 15.500h3"/></svg>
      <svg><path d="M2 3l3-2 4 4-3 3zM6 7l4 4M8 11l3-3 5 5-3 3z" stroke="#7c7748" stroke-width="3"/><path d="M2 3l3-2 4 4-3 3zM6 7l4 4M8 11l3-3 5 5-3 3z" stroke="#eee8b0"/></svg>
    </span>
    <button class="tray-arrow" aria-label="状态栏菜单"><i class="down"></i></button>
    <button class="sb" aria-label="全屏显示"><svg><path class="p" d="M2.500 1.500h13v13h-13z"/><path d="M3 3h12" stroke-width="2" stroke="#777"/></svg></button>
  </footer>
</body>
</html>
```
FILE: styles.css
```css
* {
  box-sizing: border-box;
}

body {
  display: flex;
  flex-direction: column;
  height: 100vh;
  margin: 0;
  overflow: hidden;
  background: #686868;
  font-family: "Noto Sans", "Noto Sans CJK SC", sans-serif;
  font-size: 12px;
  color: #111;
}

button {
  display: block;
  flex: none;
  margin: 0;
  padding: 0;
  border: 0;
  background: none;
  font: inherit;
  color: inherit;
}

a {
  color: inherit;
  text-decoration: none;
}

svg {
  display: block;
  flex: none;
  fill: none;
  stroke: #454a52;
}

/* title and menu */
.top {
  position: relative;
  flex: none;
}

.app-button {
  position: absolute;
  left: 0;
  top: 0;
  width: 41px;
  height: 41px;
  border: 1px solid #111;
  background: linear-gradient(#bdbdbd, #7c7c7c);
}

.app-button svg {
  stroke: none;
}

.titlebar {
  display: flex;
  align-items: center;
  height: 24px;
  background: #fff;
}

.titlebar h1 {
  flex: 1;
  margin: 0;
  padding-right: 52px;
  text-align: center;
  font-size: 12px;
  line-height: 24px;
  font-weight: normal;
}

.titlebar h1 span {
  margin-left: 16px;
}

.window-buttons {
  display: flex;
  gap: 34px;
  width: 122px;
  padding-right: 18px;
  flex: none;
}

.window-buttons svg {
  stroke: #777;
}

.menubar {
  display: flex;
  align-items: center;
  gap: 25px;
  height: 22px;
  padding-left: 55px;
  border-top: 1px solid #222;
  background: linear-gradient(#9c9c9c, #5e5e5e);
  line-height: 18px;
  color: #f2f2f2;
}

.menubar a {
  white-space: nowrap;
}

.doc-buttons {
  display: flex;
  gap: 5px;
  margin-left: auto;
  padding-right: 3px;
}

.doc-buttons svg {
  stroke: #222;
}

/* toolbars */
.toolrow {
  display: flex;
  gap: 2px;
  flex: none;
  margin-bottom: 4px;
}

.toolbar {
  display: flex;
  height: 23px;
  border-right: 1px solid #333;
  border-bottom: 1px solid #333;
  background: #ececee;
}

.grip {
  flex: none;
  width: 8px;
  background: radial-gradient(#222 1px, transparent 1px) 1px 0 / 3px 3px #777;
  border: 2px solid #636363;
}

.tb {
  width: 23px;
  height: 22px;
  padding: 2px 3px;
}

.tb svg,
.sb svg,
.tray svg,
.layer svg {
  width: 17px;
  height: 17px;
}

.p { fill: #fbfbfd; }
.g { fill: #a9adb3; }
.n { fill: #fff; stroke: #222; }
.b { fill: #c3e4fa; stroke: #1d6fb5; }
.bl { stroke: #1d6fb5; }
.blue { fill: #1f5fae; stroke: none; }
.brush { fill: #9a5a2c; stroke: #7a4820; }

.dim svg,
svg.dim,
.dim i {
  opacity: 0.4;
}

.sep {
  flex: none;
  width: 6px;
  margin: 2px 0;
  background: linear-gradient(#8b8b8b, #8b8b8b) 3px 0 / 1px 100% no-repeat;
}

.tb-arrow {
  width: 13px;
  padding-left: 3px;
}

.tb-arrow i,
.down {
  display: block;
  border: 3px solid transparent;
  border-top: 4px solid #333;
  border-bottom: 0;
  width: 0;
}

.help span {
  display: block;
  width: 14px;
  height: 14px;
  margin: 1px;
  border: 1px solid #333;
  background: #fff;
  font-weight: bold;
  line-height: 12px;
}

.combo {
  position: relative;
  display: flex;
  align-items: center;
  width: 119px;
  height: 22px;
  padding-left: 4px;
  border: 1px solid #bbb;
  border-top-color: #f5f5f5;
  background: #e1e1e1;
}

.styles .grip {
  width: 7px;
}

.styles .tb {
  width: 24px;
}

.combo.inset {
  padding-left: 18px;
}

.combo select {
  flex: 1;
  min-width: 0;
  height: 20px;
  padding: 0;
  border: 0;
  appearance: none;
  background: none;
  font: inherit;
  color: #111;
  opacity: 1;
}

.combo::after {
  content: "";
  position: absolute;
  right: 5px;
  top: 6px;
  width: 5px;
  height: 5px;
  border: solid #555;
  border-width: 0 1px 1px 0;
  transform: rotate(45deg);
}

.combo.workspace {
  width: 175px;
  padding-left: 8px;
}

.combo.layer {
  width: 300px;
  padding-left: 2px;
}

.toolbar .layer select {
  padding-left: 5px;
}

.swatch {
  flex: none;
  width: 10px;
  height: 10px;
  border: 1px solid #111;
  background: #fff;
}

.line {
  flex: none;
  height: 1px;
  margin-right: 5px;
  background: #111;
}

.props {
  font-family: "Liberation Serif", serif;
}

.combo.color { width: 149px; }
.color select { margin-left: 4px; }
.combo.ltype { width: 160px; }
.ltype .line { width: 60px; }
.combo.lweight { width: 125px; }
.lweight .line { width: 35px; }

.combo.pstyle {
  width: 118px;
  padding-left: 8px;
  background: #cbcbcb;
  font-family: "Liberation Mono", monospace;
  font-size: 10px;
}

.pstyle select { color: #777; }
.pstyle::after { opacity: 0.3; }

/* drawing area */
.work {
  display: flex;
  flex: 1;
  min-height: 0;
}

.side {
  position: relative;
  flex: none;
  width: 29px;
  overflow: hidden;
}

.right {
  width: 32px;
  padding-left: 4px;
}

.vertical {
  flex-direction: column;
  width: 25px;
  height: auto;
  border: 1px solid #333;
}

.toolbar.vertical .tb {
  width: 23px;
}

.vertical .grip {
  width: auto;
  height: 8px;
}

.hsep {
  height: 1px;
  margin: 1px 2px;
  background: #999;
}

.abc {
  position: relative;
}

.abc span {
  position: absolute;
  left: 3px;
  top: 4px;
  font: bold 8px/8px "Liberation Mono", monospace;
}

.meter {
  position: absolute;
  right: 3px;
  top: 65px;
  width: 7px;
  height: 58px;
  padding-top: 30px;
  border-radius: 4px;
  background: #858585;
  overflow: hidden;
}

.meter i {
  display: block;
  height: 28px;
  background: linear-gradient(#22b14c, #6fe08c);
}

.viewport {
  display: flex;
  flex-direction: column;
  flex: 1;
  min-width: 0;
  border: 2px solid #aaa;
  border-right-color: #fff;
  border-bottom: 1px solid #fff;
}

.view-row {
  display: flex;
  flex: 1;
  min-height: 0;
}

.canvas {
  position: relative;
  flex: 1;
  padding: 20px 2px 0 0;
  overflow: hidden;
  background-color: #212830;
  background-image:
    linear-gradient(90deg, #363e47 1px, transparent 1px 33px, #262d36 33px 34px, transparent 34px 66px, #262d36 66px 67px, transparent 67px 98px, #262d36 98px 99px, transparent 99px 131px, #262d36 131px 132px, transparent 132px),
    linear-gradient(#363e47 1px, transparent 1px 33px, #262d36 33px 34px, transparent 34px 66px, #262d36 66px 67px, transparent 67px 98px, #262d36 98px 99px, transparent 99px 131px, #262d36 131px 132px, transparent 132px);
  background-size: 164px 164px;
  background-position: 35px 127px;
}

.view-label {
  position: absolute;
  left: 3px;
  top: 4px;
  margin: 0;
  font: 13px/18px "Liberation Sans", "Noto Sans CJK SC", sans-serif;
  color: #eee;
}

.roster {
  margin: 0 auto;
  border-collapse: collapse;
  table-layout: fixed;
  width: 253px;
  font: 13px/20px "Noto Sans CJK SC", sans-serif;
  color: #e8eaec;
}

.roster th,
.roster td {
  height: 22px;
  padding: 0;
  border: 1px solid #fff;
  text-align: center;
  font-weight: normal;
}

.roster td {
  padding: 1px 2px 0 0;
}

.roster th {
  padding-right: 3px;
  font-size: 14px;
}

.roster .tall > * {
  height: 23px;
}

.ucs {
  position: absolute;
  left: 9px;
  bottom: 9px;
  stroke: #fff;
}

.viewcube {
  position: absolute;
  right: 18px;
  top: 17px;
  width: 88px;
  height: 88px;
  border: 9px solid #454b54;
  border-radius: 50%;
  font: 14px/16px "Noto Sans CJK SC", sans-serif;
  color: #c5c8cc;
}

.viewcube span {
  position: absolute;
}

.north { left: 28px; top: -15px; }
.south { left: 28px; bottom: -15px; }
.west { left: -14px; top: 27px; }
.east { right: -13px; top: 27px; }

.face {
  width: 38px;
  height: 38px;
  margin: 16px;
  border: 4px solid #c8c8c5;
  background: #b4b7bf;
  font-size: 24px;
  line-height: 28px;
  color: #50535c;
}

.wcs {
  position: absolute;
  right: 40px;
  top: 127px;
  display: flex;
  align-items: center;
  justify-content: space-between;
  width: 47px;
  height: 16px;
  padding: 0 3px;
  border: 1px solid #b0b3bb;
  border-radius: 3px;
  background: #8c9099;
  font: 11px/14px "Liberation Sans", sans-serif;
  color: #e0e2e6;
}

.wcs svg {
  stroke: #b8bbc2;
}

.vscroll {
  display: flex;
  flex-direction: column;
  width: 17px;
  background: #f0f0f0;
}

.vscroll button {
  height: 17px;
  padding-left: 3px;
}

.vscroll svg,
.hscroll svg {
  stroke: #444;
  stroke-width: 2;
}

.vscroll .thumb {
  height: 17px;
  margin: 0 1px;
  background: #cdcdcd;
}

.vscroll .track-a { flex: 275; }
.vscroll .track-b { flex: 200; }

.tab-row {
  display: flex;
  flex: none;
  height: 16px;
  border-top: 1px solid #aaa;
  background: #f0f0f0;
}

.nav {
  width: 14px;
  padding-left: 2px;
  border-right: 1px solid #999;
}

.nav svg {
  stroke: #666;
}

.f {
  fill: #666;
  stroke: none;
}

.tab {
  position: relative;
  padding: 0 9px 0 5px;
  line-height: 15px;
}

.tab::after {
  content: "";
  position: absolute;
  right: 0;
  top: 0;
  height: 15px;
  border-right: 1px solid #333;
  transform: skewX(-22deg);
}

.tab.active {
  padding: 0 12px 0 10px;
  background: #212830;
  clip-path: polygon(0 0, 100% 0, calc(100% - 6px) 100%, 6px 100%);
  color: #fff;
}

.hscroll {
  display: flex;
  align-items: center;
  width: 35%;
  margin-left: auto;
  padding-right: 21px;
}

.splitter {
  width: 5px;
  height: 14px;
  margin-right: 5px;
  background: #ccc;
}

.hscroll .thumb {
  width: 17px;
  height: 14px;
  background: #cdcdcd;
}

.hscroll .track-a { flex: 235; }
.hscroll .track-b { flex: 154; }

/* command line */
.command {
  display: flex;
  flex: none;
  margin-top: 4px;
  padding-right: 1px;
}

.command-grip {
  display: flex;
  flex-direction: column;
  align-items: center;
  justify-content: space-between;
  width: 23px;
  padding: 4px 0 5px;
  background: linear-gradient(#838383, #4c4c4c);
}

.dots {
  width: 18px;
  height: 7px;
  background: radial-gradient(#bbb 1px, transparent 1px) 0 0 / 3px 3px;
}

.command-grip svg {
  stroke: #fff;
}

.command-body {
  flex: 1;
}

.history {
  height: 35px;
  margin: 0;
  padding: 3px;
  border-bottom: 1px solid #777;
  background: #c8c8c8;
  font: 13px/14px "Noto Sans CJK SC", sans-serif;
}

.prompt {
  display: flex;
  align-items: center;
  gap: 3px;
  height: 23px;
  padding-left: 5px;
  background: #fff;
}

.prompt .down {
  border-top-color: #888;
}

.prompt svg {
  stroke: #68738a;
}

.prompt input {
  flex: 1;
  margin-left: 5px;
  padding: 0;
  border: 0;
  outline: 0;
  font: italic 13px/18px "Noto Sans CJK SC", sans-serif;
}

.prompt input::placeholder {
  color: #999;
}

/* status bar */
.status {
  display: flex;
  flex: none;
  height: 21px;
  border-top: 1px solid #111;
  background: linear-gradient(#888, #6e6e6e);
}

.coords {
  width: 217px;
  padding-left: 12px;
  font: 10px/24px "Liberation Mono", monospace;
  color: #a0a0a0;
}

.sb {
  width: 22px;
  height: 20px;
  padding: 1px 2px;
  border-right: 1px solid #777;
  background: linear-gradient(#c6c6c6, #a0a0a0);
}

.sb.on {
  background: linear-gradient(#dff3fa, #8cc5da);
}

.fill {
  flex: 1;
}

.model {
  width: 30px;
}

.gap { width: 18px; }
.gap.small { width: 6px; }

.scale {
  display: flex;
  align-items: center;
  width: 54px;
  font-family: "Liberation Mono", monospace;
  font-size: 11px;
}

.scale .down {
  border-width: 4px;
  border-bottom: 0;
  margin-left: 2px;
}

.tray {
  display: flex;
  gap: 3px;
  width: 52px;
  padding: 0 4px;
  border: 1px solid #444;
  background: #999;
}

.tray-arrow {
  width: 11px;
  padding-left: 2px;
  background: #b0b0b0;
}
```
